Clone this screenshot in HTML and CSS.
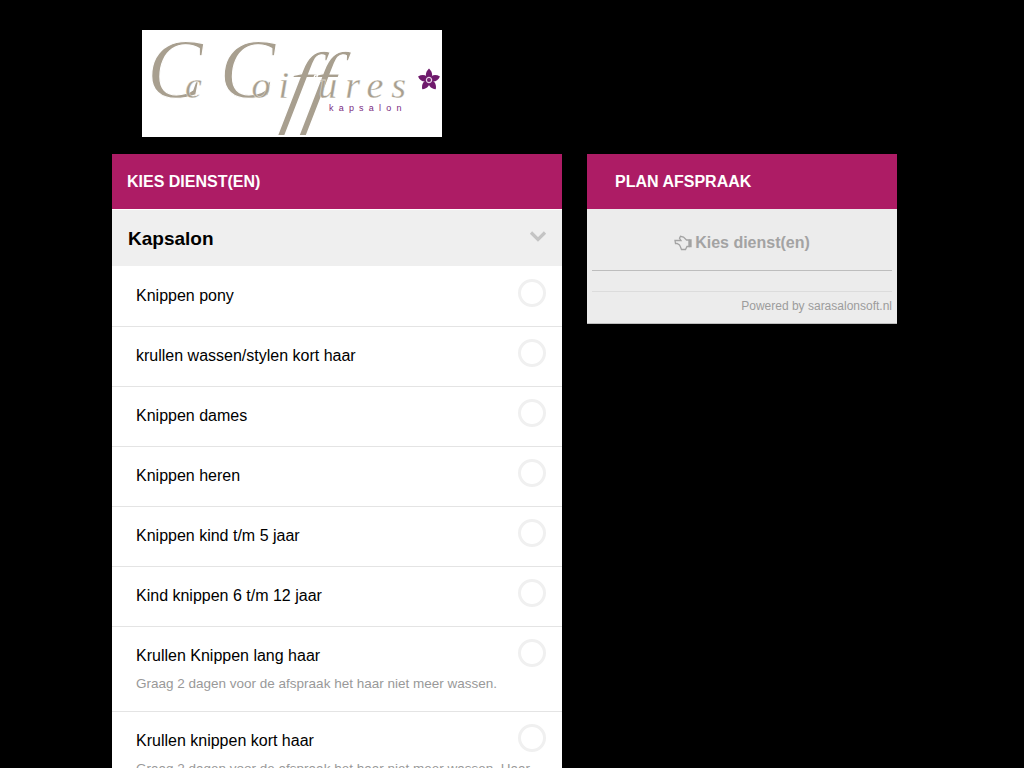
FILE: index.html
```html
<!DOCTYPE html>
<html lang="nl">
<head>
<meta charset="utf-8">
<title>Kies dienst(en)</title>
<link rel="stylesheet" href="styles.css">
</head>
<body>
<div class="page">
  <div class="logo-row">
    <div class="logo">
      <span class="logo-name"><span class="cap">C</span>c <span class="cap cap-second">C</span>oi<span class="ff">ff</span>ures</span>
      <span class="logo-sub">kapsalon</span>
      <svg class="logo-flower" viewBox="-12 -12 24 24" aria-hidden="true">
        <g fill="#6f1a6c">
          <path d="M0 0C-4.500-3-3.800-8 0-11.500 3.800-8 4.500-3 0 0z"/>
          <path transform="rotate(72)" d="M0 0C-4.500-3-3.800-8 0-11.500 3.800-8 4.500-3 0 0z"/>
          <path transform="rotate(144)" d="M0 0C-4.500-3-3.800-8 0-11.500 3.800-8 4.500-3 0 0z"/>
          <path transform="rotate(216)" d="M0 0C-4.500-3-3.800-8 0-11.500 3.800-8 4.500-3 0 0z"/>
          <path transform="rotate(288)" d="M0 0C-4.500-3-3.800-8 0-11.500 3.800-8 4.500-3 0 0z"/>
        </g>
        <circle cx="0" cy="0" r="2.600" fill="none" stroke="#e6d3e6" stroke-width="1.200"/>
      </svg>
    </div>
  </div>
  <div class="columns">
    <section class="services">
      <h2 class="panel-head">KIES DIENST(EN)</h2>
      <div class="group-head">
        <span>Kapsalon</span>
        <svg class="chevron" viewBox="0 0 18 12" aria-hidden="true"><path d="M2 2.500l7 7 7-7" /></svg>
      </div>
      <ul class="list">
        <li class="row"><div class="name">Knippen pony</div><span class="radio"></span></li>
        <li class="row"><div class="name">krullen wassen/stylen kort haar</div><span class="radio"></span></li>
        <li class="row"><div class="name">Knippen dames</div><span class="radio"></span></li>
        <li class="row"><div class="name">Knippen heren</div><span class="radio"></span></li>
        <li class="row"><div class="name">Knippen kind t/m 5 jaar</div><span class="radio"></span></li>
        <li class="row"><div class="name">Kind knippen 6 t/m 12 jaar</div><span class="radio"></span></li>
        <li class="row"><div class="name">Krullen Knippen lang haar</div><div class="desc">Graag 2 dagen voor de afspraak het haar niet meer wassen.</div><span class="radio"></span></li>
        <li class="row"><div class="name">Krullen knippen kort haar</div><div class="desc">Graag 2 dagen voor de afspraak het haar niet meer wassen. Haar</div><span class="radio"></span></li>
      </ul>
    </section>
    <aside class="plan">
      <h2 class="panel-head plan-head">PLAN AFSPRAAK</h2>
      <div class="plan-body">
        <div class="hint">
          <svg class="hand" viewBox="0 0 18 16" aria-hidden="true"><path d="M1 5.500h6L5.500 3.300l1-2 3 .8 3 2.900h2.500v6.500h-2l-1.500 3H7.500L6.500 12l-1-2L3 8.500H1.500z"/><path class="hand-cuff" d="M15.500 5h1.500v6.500h-1.500z"/></svg>
          <span>Kies dienst(en)</span>
        </div>
        <div class="summary"></div>
        <div class="powered">Powered by sarasalonsoft.nl</div>
      </div>
    </aside>
  </div>
</div>
</body>
</html>
```
FILE: styles.css
```css
* { box-sizing: border-box; }
html, body { margin: 0; padding: 0; height: 100%; background: #000; }
body { overflow: hidden; font-family: "Liberation Sans", Arial, sans-serif; color: #000; }
.page { height: 768px; overflow: hidden; padding-top: 30px; }
.logo-row { padding-left: 142px; height: 124px; }
.logo { position: relative; width: 300px; height: 107px; background: #fff; overflow: hidden; }
.logo-name { position: absolute; left: 5px; top: -8px; isolation: isolate; font-family: "Liberation Serif", serif; font-style: italic; font-size: 38px; letter-spacing: 8px; word-spacing: -8px; line-height: 90px; color: #a89f8f; white-space: pre; -webkit-text-stroke: .3px #fff; }
.cap { font-size: 84px; letter-spacing: -18px; -webkit-text-stroke: 1.100px #fff; }
.cap-second { letter-spacing: -24px; }
.ff { display: inline-block; position: relative; z-index: -1; font-size: 92px; letter-spacing: -4px; margin: 0 -12px 0 -10px; -webkit-text-stroke: 1.300px #fff; transform: translateY(18px) skewX(-12deg); }
.logo-sub { position: absolute; left: 187px; top: 72px; font-size: 9px; line-height: 12px; letter-spacing: 5.200px; color: #7a2a80; }
.logo-flower { position: absolute; left: 275px; top: 38px; width: 24px; height: 24px; }
.columns { display: flex; gap: 25px; padding-left: 112px; align-items: flex-start; }
.services { width: 450px; background: #fff; }
.plan { width: 310px; background: #ececec; }
.panel-head { margin: 0; height: 55px; padding-left: 15px; background: #ad1c65; color: #fff; font-size: 16px; font-weight: 700; line-height: 55px; }
.plan-head { padding-left: 28px; }
.group-head { display: flex; justify-content: space-between; align-items: center; height: 56px; margin-top: 1px; padding: 2px 15px 0 16px; background: #efefef; font-size: 19px; font-weight: 700; }
.chevron { width: 18px; height: 12px; margin-top: -6px; fill: none; stroke: #c4c4c4; stroke-width: 3.200; }
.list { margin: 0; padding: 1px 0 0; list-style: none; }
.row { position: relative; min-height: 60px; padding: 20px 32px 0 24px; border-bottom: 1px solid #e4e4e4; }
.name { font-size: 16px; line-height: 18px; }
.desc { margin-top: 11px; padding-bottom: 20px; font-size: 13.500px; line-height: 15px; color: #999; }
.radio { position: absolute; top: 12px; right: 16px; width: 28px; height: 28px; border: 3px solid #f0f0f0; border-radius: 50%; background: #fff; }
.plan-body { padding: 0 5px; height: 115px; border-bottom: 1px solid #bdbdbd; }
.hint { display: flex; justify-content: center; align-items: center; gap: 3px; height: 62px; padding-top: 6px; border-bottom: 1px solid #bdbdbd; color: #a3a3a3; font-size: 16px; font-weight: 700; }
.hand { width: 18px; height: 16px; fill: none; stroke: #a3a3a3; stroke-width: 1.300; }
.hand-cuff { fill: #a3a3a3; }
.summary { height: 21px; border-bottom: 1px solid #dcdcdc; }
.powered { padding-top: 7px; font-size: 12px; line-height: 14px; color: #9c9c9c; text-align: right; }
```
